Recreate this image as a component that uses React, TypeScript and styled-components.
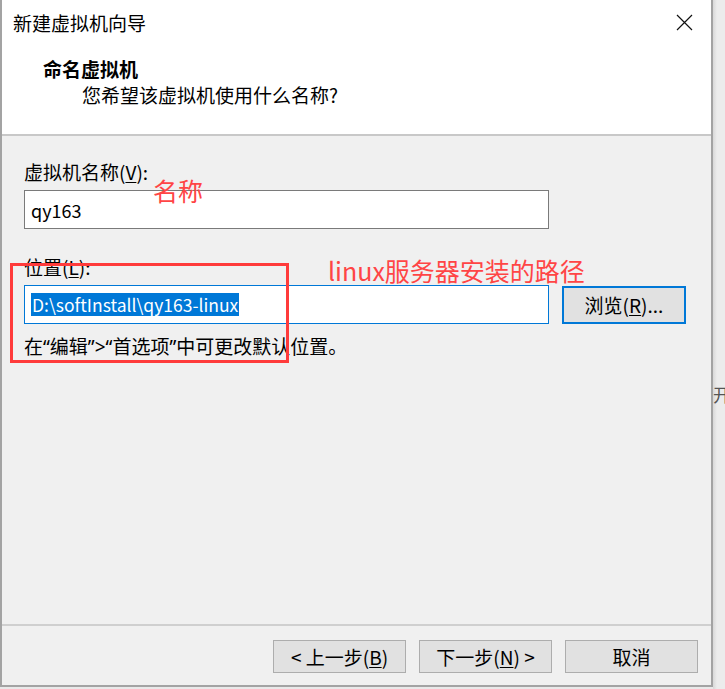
import React from "react";
import styled, { createGlobalStyle } from "styled-components";

const Global = createGlobalStyle`
  html, body { margin: 0; padding: 0; }
  body {
    width: 725px;
    height: 689px;
    overflow: hidden;
    background: #e9e9e9;
    font-family: "Microsoft YaHei UI", "Noto Sans CJK SC", sans-serif;
  }
`;

const Page = styled.div`
  display: flex;
  width: 725px;
  height: 689px;
`;

const Window = styled.div`
  position: relative;
  width: 713px;
  height: 687px;
  box-sizing: border-box;
  border-left: 2px solid #a3a3a3;
  border-right: 2px solid #a3a3a3;
  border-bottom: 2px solid #a3a3a3;
  background: #f0f0f0;
  display: flex;
  flex-direction: column;
  font-size: 19px;
  color: #000;
`;

const Outside = styled.div`
  flex: 1;
  padding-top: 382px;
  font-size: 18px;
  line-height: 24px;
  color: #555;
  overflow: hidden;
  white-space: nowrap;
  background: linear-gradient(to right, #d8d8d8, #ececec 4px);
`;

const Header = styled.div`
  background: #fff;
  height: 134px;
  border-bottom: 2px solid #c8c8c8;
  display: flex;
  flex-direction: column;
`;

const TitleBar = styled.div`
  display: flex;
  align-items: center;
  justify-content: space-between;
  height: 44px;
  padding: 0 18px 0 11px;
`;

const Title = styled.div`
  font-size: 19px;
  color: #000;
`;

const Heading = styled.div`
  margin-top: 11px;
  padding-left: 41px;
  font-weight: bold;
  line-height: 27px;
`;

const SubHeading = styled.div`
  padding-left: 80px;
  line-height: 26px;
`;

const Body = styled.div`
  position: relative;
  flex: 1;
  padding: 23px 0 0 22px;
  display: flex;
  flex-direction: column;
`;

const Label = styled.div<{ $top?: number }>`
  line-height: 25px;
  margin-top: ${(p) => p.$top ?? 0}px;
`;

const U = styled.span`
  text-decoration: underline;
  text-underline-offset: 2px;
`;

const Row = styled.div`
  display: flex;
  align-items: center;
  gap: 13px;
  margin-top: 6px;
`;

const TextBox = styled.div<{ $focused?: boolean }>`
  width: 525px;
  height: 39px;
  box-sizing: border-box;
  background: #fff;
  border: 1px solid ${(p) => (p.$focused ? "#0078d7" : "#7a7a7a")};
  display: flex;
  align-items: center;
  padding-left: 6px;
  font-size: 18px;
`;

const Selected = styled.span`
  background: #0078d7;
  color: #fff;
  line-height: 23px;
  font-size: 17.5px;
  padding: 0 1px;
`;

const BrowseButton = styled.button`
  width: 124px;
  height: 38px;
  box-sizing: border-box;
  border: 2px solid #0078d7;
  background: #e1e1e1;
  font-family: inherit;
  font-size: 19px;
  color: #000;
  padding: 0;
`;

const Hint = styled.div`
  margin-top: 9px;
  line-height: 25px;
`;

const Quote = styled.span`
  font-family: "Noto Sans", "Liberation Sans", sans-serif;
`;

const RedBox = styled.div`
  position: absolute;
  left: 8px;
  top: 127px;
  width: 279px;
  height: 100px;
  box-sizing: border-box;
  border: 3px solid #ff3b3b;
  pointer-events: none;
`;

const Note = styled.div<{ $left: number; $top: number; $size: number }>`
  position: absolute;
  left: ${(p) => p.$left}px;
  top: ${(p) => p.$top}px;
  font-size: ${(p) => p.$size}px;
  color: #ff4545;
  white-space: nowrap;
  line-height: 1;
`;

const Footer = styled.div`
  border-top: 2px solid #cfcfcf;
  padding: 14px 13px 12px 0;
  display: flex;
  justify-content: flex-end;
  gap: 13px;
`;

const Button = styled.button`
  width: 133px;
  height: 33px;
  box-sizing: border-box;
  border: 1px solid #adadad;
  background: #e1e1e1;
  font-family: inherit;
  font-size: 19px;
  color: #000;
  padding: 0;
  white-space: pre;
`;

const CloseIcon = () => (
  <svg width="17" height="17" viewBox="0 0 17 17">
    <path d="M1 1 L16 16 M16 1 L1 16" stroke="#111" strokeWidth="1.2" />
  </svg>
);

export default function App() {
  return (
    <Page>
      <Global />
      <Window>
        <Header>
          <TitleBar>
            <Title>新建虚拟机向导</Title>
            <CloseIcon />
          </TitleBar>
          <Heading>命名虚拟机</Heading>
          <SubHeading>您希望该虚拟机使用什么名称?</SubHeading>
        </Header>
        <Body>
          <Label>
            虚拟机名称(<U>V</U>):
          </Label>
          <Row>
            <TextBox>qy163</TextBox>
          </Row>
          <Label $top={25}>
            位置(<U>L</U>):
          </Label>
          <Row>
            <TextBox $focused>
              <Selected>D:\softInstall\qy163-linux</Selected>
            </TextBox>
            <BrowseButton>
              浏览(<U>R</U>)...
            </BrowseButton>
          </Row>
          <Hint>
            在<Quote>“</Quote>编辑<Quote>”&gt;“</Quote>首选项<Quote>”</Quote>中可更改默认位置。
          </Hint>
          <RedBox />
          <Note $left={151} $top={42} $size={25}>名称</Note>
          <Note $left={326} $top={122} $size={25}>linux服务器安装的路径</Note>
        </Body>
        <Footer>
          <Button>
            {"< 上一步("}
            <U>B</U>
            {")"}
          </Button>
          <Button>
            {"下一步("}
            <U>N</U>
            {") >"}
          </Button>
          <Button>取消</Button>
        </Footer>
      </Window>
      <Outside>开</Outside>
    </Page>
  );
}
